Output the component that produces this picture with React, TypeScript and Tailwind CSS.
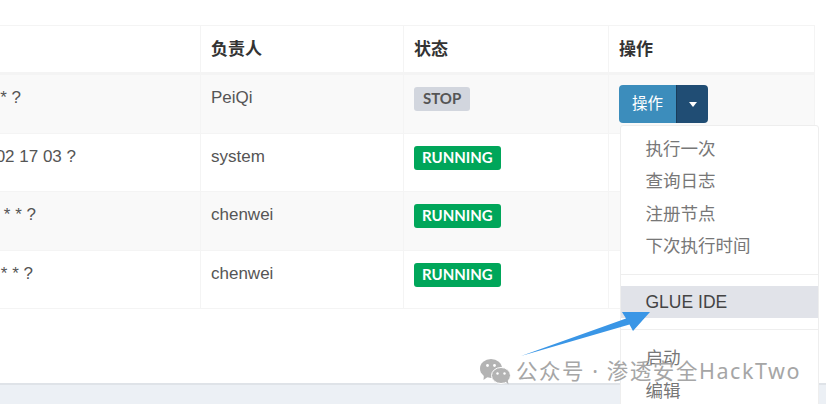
const font = { fontFamily: '"Liberation Sans", "Noto Sans CJK SC", sans-serif' };

const rows = [
  { cron: "* ?", pad: "pr-[179px]", owner: "PeiQi", status: "STOP", bg: "bg-[#f9f9f9]", h: "h-[59px]" },
  { cron: "02 17 03 ?", pad: "pr-[124px]", owner: "system", status: "RUNNING", bg: "bg-white", h: "h-[58px]" },
  { cron: "* * ?", pad: "pr-[164px]", owner: "chenwei", status: "RUNNING", bg: "bg-[#f9f9f9]", h: "h-[59px]" },
  { cron: "* * ?", pad: "pr-[167px]", owner: "chenwei", status: "RUNNING", bg: "bg-white", h: "h-[58px]" },
];

function Badge({ status }: { status: string }) {
  const stop = status === "STOP";
  return (
    <span
      className={`inline-flex h-[24px] items-center rounded-[3px] text-[15px] font-bold leading-none ${
        stop ? "bg-[#d2d6de] px-[9px] text-[#555]" : "bg-[#00a65a] px-[8px] text-white"
      }`}
      style={{ fontFamily: '"Lato", sans-serif' }}
    >
      {status}
    </span>
  );
}

function MenuItem({ label, active }: { label: string; active?: boolean }) {
  return (
    <div
      className={`h-[32.3px] pl-[24.5px] text-[17.5px] leading-[32px] ${
        active ? "bg-[#e1e3e9] text-[#444]" : "text-[#777]"
      }`}
    >
      {label}
    </div>
  );
}

export default function App() {
  return (
    <div className="relative h-[404px] w-[826px] overflow-hidden bg-white" style={font}>
      <div className="flex h-[383px] flex-col pt-[25px]">
        <div className="w-[815px] border-t border-r border-[#f4f4f4]">
          <div className="grid h-[49px] grid-cols-[200px_203px_205px_206px] border-b-[3px] border-[#f4f4f4] text-[17px] font-bold text-[#333]">
            <div />
            <div className="border-l border-[#f4f4f4] pl-[10px] pt-[11px] leading-[26px]">负责人</div>
            <div className="border-l border-[#f4f4f4] pl-[10px] pt-[11px] leading-[26px]">状态</div>
            <div className="border-l border-[#f4f4f4] pl-[10px] pt-[11px] leading-[26px]">操作</div>
          </div>
          {rows.map((r, i) => (
            <div
              key={i}
              className={`grid grid-cols-[200px_203px_205px_206px] border-b border-[#f4f4f4] text-[17px] text-[#555] ${r.bg} ${r.h}`}
            >
              <div className={`flex justify-end overflow-hidden whitespace-nowrap pt-[10px] leading-[26px] ${r.pad}`}>{r.cron}</div>
              <div className="border-l border-[#f4f4f4] pl-[10px] pt-[10px] leading-[26px]">{r.owner}</div>
              <div className="border-l border-[#f4f4f4] pl-[10px] pt-[11px]">
                <Badge status={r.status} />
              </div>
              <div className="border-l border-[#f4f4f4] pl-[10px] pt-[10px]">
                {i === 0 && (
                  <div className="flex h-[38px] w-[89px] overflow-hidden rounded-[4px] text-[15.5px] text-white">
                    <div className="flex w-[57px] items-center justify-center bg-[#3c8dbc]">操作</div>
                    <div className="flex flex-1 items-center justify-center border-l border-[#1a3c5a] bg-[#204d74]">
                      <span className="h-0 w-0 border-x-[4.5px] border-t-[5px] border-x-transparent border-t-white" />
                    </div>
                  </div>
                )}
              </div>
            </div>
          ))}
        </div>
      </div>
      <div className="h-[21px] border-t-2 border-[#dfe3e8] bg-[#ecf0f5]" />

      <div className="absolute left-[620px] top-[125px] h-[300px] w-[199px] rounded-[3px] border border-[#eeeeee] bg-white pt-[7px]">
        <MenuItem label="执行一次" />
        <MenuItem label="查询日志" />
        <MenuItem label="注册节点" />
        <MenuItem label="下次执行时间" />
        <div className="mb-[11px] mt-[12px] h-[1px] bg-[#eeeeee]" />
        <MenuItem label="GLUE IDE" active />
        <div className="mb-[12px] mt-[11px] h-[1px] bg-[#eeeeee]" />
        <MenuItem label="启动" />
        <MenuItem label="编辑" />
      </div>

      <svg className="absolute left-[515px] top-[303px]" width="140" height="60" viewBox="0 0 140 60">
        <path d="M6 53 L111 15.5 L107 9 L135 9 L118 28 L114.500 21.500 Z" fill="#3a96e6" />
      </svg>

      <div className="absolute left-[480px] top-[357px] flex items-center">
        <svg width="31" height="27" viewBox="0 0 31 27" fill="#b3b3b3">
          <ellipse cx="11" cy="10.500" rx="11" ry="9.500" />
          <path d="M4 16 L3.500 22 L9 18 Z" />
          <ellipse cx="21" cy="17.500" rx="9.500" ry="8" stroke="#fff" strokeWidth="1" />
          <path d="M25 23 L28.500 26.500 L27.500 21 Z" />
          <circle cx="7.500" cy="7.500" r="1.400" fill="#fff" />
          <circle cx="14.500" cy="7.500" r="1.400" fill="#fff" />
          <circle cx="17.500" cy="15.500" r="1.200" fill="#fff" />
          <circle cx="24.500" cy="15.500" r="1.200" fill="#fff" />
        </svg>
        <span
          className="ml-[5px] whitespace-nowrap text-[21.5px] leading-[28px] tracking-[1.55px] text-[#a6a6a6]"
          style={{ fontFamily: '"Noto Sans", "Noto Sans CJK SC", sans-serif' }}
        >
          公众号 · 渗透安全HackTwo
        </span>
      </div>
    </div>
  );
}
